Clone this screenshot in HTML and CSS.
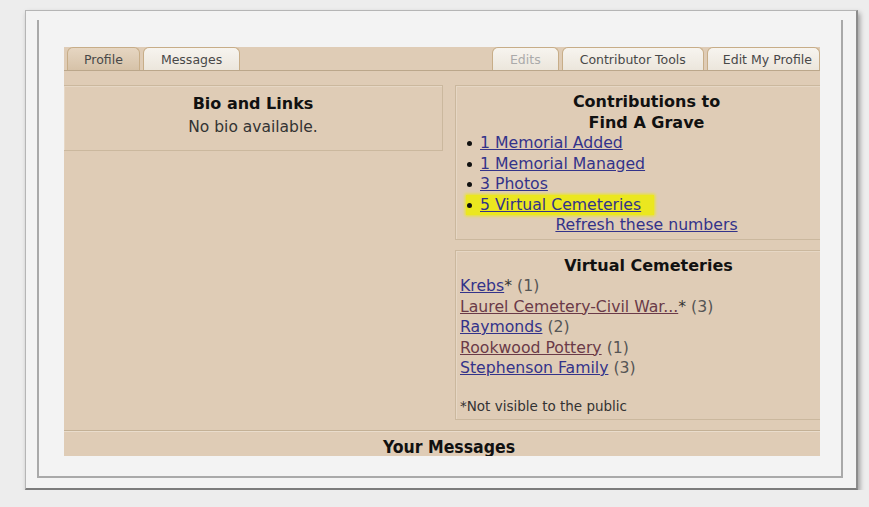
FILE: index.html
```html
<!DOCTYPE html>
<html lang="en">

<head>
    <meta charset="UTF-8">
    <meta name="viewport" content="width=device-width, initial-scale=1.0">
    <title>Find A Grave - Profile</title>
    <link rel="stylesheet" href="styles.css">
</head>

<body>
    <!-- 相框 -->
    <div class="frame">
        <div class="inner">
            <div class="page">
                <!-- 标签栏 -->
                <div class="tabs">
                    <div class="tab active">Profile</div>
                    <div class="tab">Messages</div>
                    <div class="spacer"></div>
                    <div class="tab off">Edits</div>
                    <div class="tab">Contributor Tools</div>
                    <div class="tab">Edit My Profile</div>
                </div>

                <div class="content">
                    <div class="col-left">
                        <div class="box bio">
                            <h3>Bio and Links</h3>
                            <p>No bio available.</p>
                        </div>
                    </div>
                    <div class="col-right">
                        <div class="box contrib">
                            <h3>Contributions to<br>Find A Grave</h3>
                            <ul>
                                <li><a href="#">1 Memorial Added</a></li>
                                <li><a href="#">1 Memorial Managed</a></li>
                                <li><a href="#">3 Photos</a></li>
                                <li class="hl"><a href="#">5 Virtual Cemeteries</a></li>
                            </ul>
                            <div class="refresh"><a href="#">Refresh these numbers</a></div>
                        </div>
                        <div class="box vc">
                            <h3>Virtual Cemeteries</h3>
                            <div class="vc-row"><a href="#">Krebs</a>* <span class="num">(1)</span></div>
                            <div class="vc-row"><a href="#" class="seen">Laurel Cemetery-Civil War...</a>* <span class="num">(3)</span></div>
                            <div class="vc-row"><a href="#">Raymonds</a> <span class="num">(2)</span></div>
                            <div class="vc-row"><a href="#" class="seen">Rookwood Pottery</a> <span class="num">(1)</span></div>
                            <div class="vc-row"><a href="#">Stephenson Family</a> <span class="num">(3)</span></div>
                            <p class="note">*Not visible to the public</p>
                        </div>
                    </div>
                </div>

                <!-- 留言 -->
                <div class="messages">
                    <h3>Your Messages</h3>
                </div>
            </div>
        </div>
    </div>
</body>

</html>
```

FILE: styles.css
```css
/* 外框 */
body {
    margin: 0;
    padding: 10px 0 0 25px;
    background-color: #ededed;
    font-family: "DejaVu Sans", Verdana, sans-serif;
}

.frame {
    width: 833px;
    height: 480px;
    box-sizing: border-box;
    background-color: #f3f3f3;
    border: 1px solid #b5b5b5;
    border-right: 2px solid #8c8c8c;
    border-bottom: 2px solid #7c7c7c;
    box-shadow: 2px 3px 5px rgba(0, 0, 0, 0.35);
    padding: 9px 13px 0 11px;
}

.inner {
    height: 458px;
    box-sizing: border-box;
    border-left: 2px solid #a9a9a9;
    border-right: 2px solid #a9a9a9;
    border-bottom: 2px solid #a9a9a9;
    padding: 27px 21px 0 25px;
}

.page {
    height: 409px;
    background-color: #dfccb6;
    overflow: hidden;
}

/* 标签栏 */
.tabs {
    display: flex;
    height: 23px;
    border-bottom: 1px solid #bba78b;
    padding-left: 3px;
}

.spacer {
    flex: 1;
}

.tab {
    height: 22px;
    margin-right: 3px;
    padding: 0 17px;
    border: 1px solid #c7ad88;
    border-bottom: none;
    border-radius: 6px 6px 0 0;
    background: linear-gradient(#f7f4ef, #ece6dc);
    font-size: 12.5px;
    line-height: 23px;
    color: #484848;
    white-space: nowrap;
}

.tab:first-child {
    padding: 0 16px;
}

.tab:last-child {
    margin-right: 0;
    padding: 0 7px 0 15px;
}

.tab.active {
    background: linear-gradient(#e6d6c2, #d6c2a8);
}

.tab.off {
    color: #aaa;
}

/* 内容 */
.content {
    display: flex;
    gap: 12px;
    padding-top: 14px;
}

.col-left {
    width: 379px;
}

.col-right {
    flex: 1;
    display: flex;
    flex-direction: column;
    gap: 10px;
    margin-right: -18px;
}

.box {
    border: 1px solid #cbb89e;
    box-shadow: inset 1px 1px 0 #e6d7c5;
    color: #333;
}

.bio {
    border-left: none;
    height: 64px;
    text-align: center;
}

h3 {
    margin: 0;
    font-size: 16px;
    line-height: 21px;
    color: #111;
    text-align: center;
}

.bio h3 {
    padding-top: 7px;
}

.bio p {
    margin: 4px 0 0;
    font-size: 15.5px;
}

a {
    color: #33338a;
}

a.seen {
    color: #6a3a48;
}

.contrib {
    height: 155px;
    padding-top: 5px;
    box-sizing: border-box;
    font-size: 15.7px;
}

.contrib ul {
    list-style: none;
    margin: 0;
    padding: 0 0 0 11px;
}

.contrib li {
    line-height: 20.5px;
}

.contrib li::before {
    content: "";
    display: inline-block;
    width: 5px;
    height: 5px;
    border-radius: 50%;
    background-color: #111;
    margin-right: 8px;
    vertical-align: middle;
}

.contrib li.hl {
    width: fit-content;
    margin-left: -1px;
    padding: 0 13px 0 1px;
    background-color: #ebe71f;
    box-shadow: 0 0 3px 1px #ebe71f;
}

.refresh {
    text-align: center;
    line-height: 20.5px;
}

.vc {
    height: 170px;
    box-sizing: border-box;
    padding: 4px 0 0 4px;
    font-size: 15.7px;
}

.vc-row {
    line-height: 20.5px;
}

.num {
    color: #555;
}

.note {
    margin: 19px 0 0;
    font-size: 13.5px;
    color: #333;
}

/* 底部 */
.messages {
    margin-top: 10px;
    border-top: 1px solid #c4b196;
    box-shadow: inset 0 1px 0 #e9dccc;
    padding: 6px 0 0 14px;
}

.messages h3 {
    font-size: 17.5px;
    font-stretch: condensed;
}
```
